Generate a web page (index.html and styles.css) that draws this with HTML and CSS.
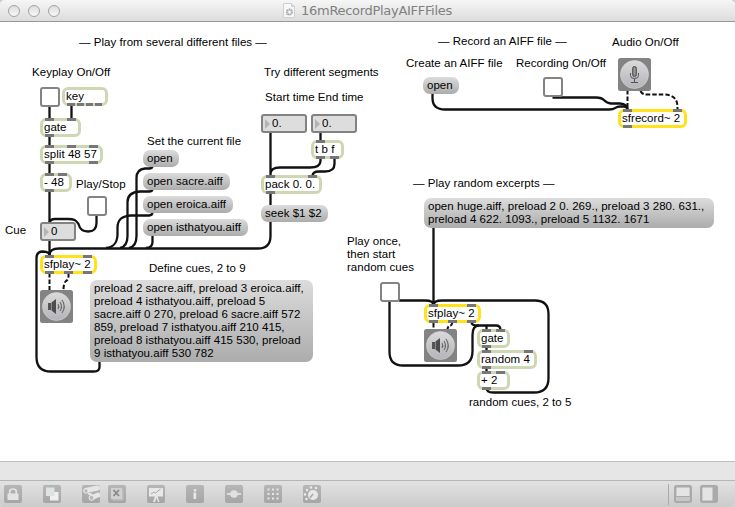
FILE: index.html
```html
<!DOCTYPE html>
<html lang="en">
<head>
<meta charset="utf-8">
<title>16mRecordPlayAIFFFiles</title>
<link rel="stylesheet" href="styles.css">
</head>
<body>
<div class="window">
<header class="titlebar">
  <div class="lights"><i></i><i></i><i></i></div>
  <div class="doc">
    <svg width="12" height="15" viewBox="0 0 12 15"><path d="M.5.5h8l3 3v11H.5z" fill="#f7f7f7" stroke="#cfcfcf"/><path d="M8.500.5v3h3" fill="#ddd" stroke="#cfcfcf"/><circle cx="6.500" cy="9" r="2.700" fill="#ddd" stroke="#a3adb0" stroke-width="1.700" stroke-dasharray="1.700 .6"/><path d="M4 11l-1 1M5 7L4 6" stroke="#e6c06a"/><circle cx="6.500" cy="9" r="1" fill="#fff"/></svg>
    <span>16mRecordPlayAIFFFiles</span>
  </div>
</header>

<main class="patcher">
  <svg class="wires" width="735" height="439" viewBox="0 22 735 439">
    <g class="cord">
      <path d="M49.500 106V119M71.500 105V119M49.500 136V146M49.500 163V174M49.500 191V223M49.500 240V256"/>
      <path d="M49.500 223Q50 219 55 219H68C76 219 76 221 78.500 224C80 230 83 231.500 88 231.500C94 231.500 96.500 229 96.500 223V215"/>
      <path d="M152.500 166Q152.500 168.500 149 168.500H145C139 169 136.500 173 136.500 178V236C136.500 243 134 247 129 248"/>
      <path d="M152.500 189Q152.500 191.500 149 191.500H140C131 192 127.500 196 127.500 202V236C127.500 243 125 247 120 248"/>
      <path d="M152.500 212Q152.500 215.500 149 215.500H131C121 216 117.500 220 117.500 228V235C117 243 114 247 106 248"/>
      <path d="M152.500 235V242Q152.500 247.500 146 248"/>
      <path d="M270.500 221V236Q270.500 248.500 258 248.500H59Q49.500 248.500 49.500 255"/>
      <path d="M99.500 361V367Q99.500 371.500 94 371.500H51Q36.500 371.500 36.500 357V258Q36.500 251.500 43 251.500Q49.500 252 49.500 255"/>
      <path d="M270.500 132V176M270.500 192V206M320.500 132V141M320.500 157V161Q320.500 167.500 310 167.500H280Q270.500 167.500 270.500 174M334.500 157V164Q334.500 171.500 325 171.500H319Q312.500 171.500 312.500 176"/>
      <path d="M432.500 93V98Q432.500 109.500 445 109.500H609C617 109.500 614 106.500 620 106.500H624Q627.500 106.500 627.500 110"/>
      <path d="M552.500 97.500H596C607 97.500 602 103 611 103.500H620Q627.500 104 627.500 110"/>
      <path d="M433.500 227V305M399 300.500H425Q433.500 300.500 433.500 305M433.500 305Q433.500 300.500 442 300.500H535Q548.500 300.500 548.500 314V378Q548.500 392.500 534 392.500H493Q486.500 392.500 486.500 388"/>
      <path d="M389.500 301V352Q389.500 365.500 403 365.500H458Q472.500 365.500 472.500 351V335Q472.500 325.500 479 325.500"/>
      <path d="M471.500 322Q471.500 325.500 477 325.500H496Q500.500 325.500 500.500 330M486.500 325.500V330M486.500 347V351M486.500 368V372"/>
    </g>
    <g class="signal">
      <path d="M49.500 273V291M68.500 273V277Q68 280 66 281Q63.500 283 63.500 290M627.500 90V110M640.500 91Q642 94.500 647 94.500H664Q677.500 95 677.500 107V110M433.500 323V330M452.500 322Q452 326 449 326Q447.500 327 447.500 330"/>
    </g>
  </svg>

  <p class="note n-files">— Play from several different files —</p>
  <p class="note n-keyplay">Keyplay On/Off</p>
  <p class="note n-segments">Try different segments</p>
  <p class="note n-times">Start time End time</p>
  <p class="note n-current">Set the current file</p>
  <p class="note n-playstop">Play/Stop</p>
  <p class="note n-cue">Cue</p>
  <p class="note n-define">Define cues, 2 to 9</p>
  <p class="note n-record">— Record an AIFF file —</p>
  <p class="note n-create">Create an AIFF file</p>
  <p class="note n-recording">Recording On/Off</p>
  <p class="note n-audio">Audio On/Off</p>
  <p class="note n-excerpts">— Play random excerpts —</p>
  <p class="note n-once">Play once,<br>then start<br>random cues</p>
  <p class="note n-random">random cues, 2 to 5</p>

  <div class="toggle t-key"></div>
  <div class="toggle t-play"></div>
  <div class="toggle t-rec"></div>
  <div class="toggle t-once"></div>

  <div class="obj o-key">key<svg class="ports"><path d="M5 17.500h8M15 17.500h7M24 17.500h7M33 17.500h7"/></svg></div>
  <div class="obj o-gate">gate<svg class="ports"><path d="M5 1.500h9M27 1.500h9M5 17.500h9"/></svg></div>
  <div class="obj o-split">split 48 57<svg class="ports"><path d="M5 1.500h9M27 1.500h9M49 1.500h9M5 17.500h9M49 17.500h9"/></svg></div>
  <div class="obj o-minus">- 48<svg class="ports"><path d="M5 1.500h9M18 1.500h9M5 17.500h9"/></svg></div>
  <div class="obj sound o-sfplay">sfplay~ 2<svg class="ports"><path d="M5 1.500h9M43 1.500h9M5 17.500h9M24 17.500h9M43 17.500h9"/></svg></div>
  <div class="obj o-tbf">t b f<svg class="ports"><path d="M5 1.500h9M5 17.500h9M19 17.500h9"/></svg></div>
  <div class="obj o-pack">pack 0. 0.<svg class="ports"><path d="M5 1.500h9M47 1.500h9M5 17.500h9"/></svg></div>
  <div class="obj sound o-sfrecord">sfrecord~ 2<svg class="ports"><path d="M5 1.500h9M55 1.500h9M5 17.500h9"/></svg></div>
  <div class="obj sound o-sfplay2">sfplay~ 2<svg class="ports"><path d="M5 1.500h9M43 1.500h9M5 17.500h9M24 17.500h9M43 17.500h9"/></svg></div>
  <div class="obj o-gate2">gate<svg class="ports"><path d="M5 1.500h9M19 1.500h9M5 17.500h9"/></svg></div>
  <div class="obj o-random">random 4<svg class="ports"><path d="M5 1.500h9M47 1.500h9M5 17.500h9"/></svg></div>
  <div class="obj o-plus">+ 2<svg class="ports"><path d="M5 1.500h9M19 1.500h9M5 17.500h9"/></svg></div>

  <div class="num f-cue">0</div>
  <div class="num f-start">0.</div>
  <div class="num f-end">0.</div>

  <div class="msg m-open">open</div>
  <div class="msg m-sacre">open sacre.aiff</div>
  <div class="msg m-eroica">open eroica.aiff</div>
  <div class="msg m-isthatyou">open isthatyou.aiff</div>
  <div class="msg m-seek">seek $1 $2</div>
  <div class="msg m-preload">preload 2 sacre.aiff, preload 3 eroica.aiff,<br>preload 4 isthatyou.aiff, preload 5<br>sacre.aiff 0 270, preload 6 sacre.aiff 572<br>859, preload 7 isthatyou.aiff 210 415,<br>preload 8 isthatyou.aiff 415 530, preload<br>9 isthatyou.aiff 530 782</div>
  <div class="msg m-create">open</div>
  <div class="msg m-huge">open huge.aiff, preload 2 0. 269., preload 3 280. 631.,<br>preload 4 622. 1093., preload 5 1132. 1671</div>

  <svg class="audio a-mic" viewBox="0 0 33 33"><use href="#disc"/><g fill="none" stroke="#555"><rect x="14.500" y="8.500" width="4" height="10" rx="2" fill="#777"/><path d="M14.500 11h4M14.500 13h4M14.500 15h4M16.500 9v9" stroke="#aaa" stroke-width=".5"/><path d="M12.500 15v2.500q0 3 4 3t4-3V15M16.500 20.500V24M13 24.500h7"/></g></svg>
  <svg class="audio a-out" viewBox="0 0 33 33"><use href="#disc"/><use href="#speaker"/></svg>
  <svg class="audio a-out2" viewBox="0 0 33 33"><use href="#disc"/><use href="#speaker"/></svg>
  <svg class="defs" width="0" height="0"><defs>
    <linearGradient id="face" x2="0" y2="1"><stop stop-color="#dadada"/><stop offset="1" stop-color="#b3b3b9"/></linearGradient>
    <g id="disc"><rect width="33" height="33" rx="2.500" fill="#838383"/><circle cx="16.500" cy="16.500" r="14" fill="url(#face)" stroke="#d6d6d6" stroke-width=".6"/></g>
    <g id="speaker"><path d="M8 13h3v7H8z" fill="#555"/><path d="M11.500 12.500L16 9v15l-4.500-3.500z" fill="#4d4d4d"/><path d="M18 14q1.600 2.500 0 5M20 12q3 4.500 0 9M22 10q4.500 6.500 0 13" fill="none" stroke="#666" stroke-width="1.100"/></g>
  </defs></svg>
</main>

<div class="status"></div>
<footer class="toolbar">
  <div class="tools">
    <svg class="tool" viewBox="0 0 18 18"><path d="M5.700 9V6.500q0-2.500 3.300-2.500t3.300 2.500V9" fill="none" stroke="#e4e4e4" stroke-width="1.700"/><rect x="3.500" y="8.500" width="11" height="6.500" rx=".6" fill="#e4e4e4"/></svg>
    <svg class="tool patch" viewBox="0 0 18 18"><rect x="7" y="7" width="8.500" height="8.500" fill="#f0f0f0"/><rect x="3" y="2.500" width="8.500" height="8.500" fill="#dfe3e2"/></svg>
    <svg class="tool" viewBox="0 0 18 18"><path d="M4 5.500L15.500 3M10 12.500l6-2.500" stroke="#e6e6e6" stroke-width="5" stroke-linecap="round"/><path d="M6 8.500l4 1" stroke="#e6e6e6" stroke-width="2"/><g fill="#b8b8b8" stroke="#eee"><circle cx="4" cy="6" r="2.200"/><circle cx="9.500" cy="12.800" r="2.500"/></g></svg>
    <svg class="tool close" viewBox="0 0 18 18"><path d="M14 4l1.500 1v10.500H5L3.500 14" fill="#bdbdbd"/><rect x="3" y="3" width="11" height="11" fill="#d1d1d1"/><path d="M5.500 5L11 11M11 5L5.500 11" stroke="#888" stroke-width="1.800"/></svg>
    <svg class="tool" viewBox="0 0 18 18"><path d="M2 3h14v8.500H2zM8 11.500h2L8 17H6zM9 11.500h1.500L12.500 17H11z" fill="#e8e8e8"/><path d="M4 9l3-2 1.500 1 5-4" fill="none" stroke="#aaa"/></svg>
    <svg class="tool" viewBox="0 0 18 18"><path d="M7.800 4h2.400v2.400H7.800zM7.500 7.500h2.700V14H7.500z" fill="#e8e8e8"/></svg>
    <svg class="tool" viewBox="0 0 18 18"><path d="M2 9h14" stroke="#ddd" stroke-width="2"/><circle cx="9" cy="9" r="3.800" fill="#e0e0e0"/></svg>
    <svg class="tool" viewBox="0 0 18 18"><path d="M3.500 4.500h12M3.500 9h12M3.500 13.500h12" stroke="#e6e6e6" stroke-width="2" stroke-dasharray="2 2.500"/></svg>
    <svg class="tool" viewBox="0 0 18 18"><circle cx="10" cy="10" r="5" fill="#e8e8e8"/><path d="M10 9l-3 4" stroke="#aaa" stroke-width="1.500"/><g fill="#eee"><circle cx="3.500" cy="14" r="1.200"/><circle cx="2" cy="9.500" r="1.200"/><circle cx="4" cy="5" r="1.200"/><circle cx="8" cy="2.500" r="1.200"/><circle cx="13" cy="3" r="1.200"/></g></svg>
  </div>
  <div class="views">
    <svg width="18" height="18"><rect x="1.200" y="1.200" width="15.600" height="15.600" rx="1.500" fill="#e4e4e4" stroke="#aaa" stroke-width="2.400"/><path d="M2.400 12h13.200v3.600H2.400z" fill="#c7c7c7"/><path d="M2 11.500h14" stroke="#aaa"/></svg>
    <svg width="18" height="18"><rect x="1.200" y="1.200" width="15.600" height="15.600" rx="1.500" fill="#e4e4e4" stroke="#aaa" stroke-width="2.400"/><path d="M12.500 2h4v14h-4z" fill="#aaa"/></svg>
  </div>
</footer>
</div>
</body>
</html>
```
FILE: styles.css
```css
* { box-sizing: border-box; }
body { margin: 0; background: #ccc; font: 11.5px/13px "Liberation Sans", Arial, sans-serif; letter-spacing: 0.04px; color: #000; }
.window { width: 735px; height: 507px; display: flex; flex-direction: column; overflow: hidden; border-radius: 5px 5px 4px 4px; background: #fff; }

.titlebar { position: relative; height: 22px; display: flex; align-items: center; justify-content: center; background: linear-gradient(#f6f6f6, #dcdcdc); border-bottom: 1px solid #999; }
.lights { position: absolute; left: 8px; top: 5px; display: flex; gap: 8px; }
.lights i { width: 12px; height: 12px; border: 1px solid #a2a2a2; border-radius: 50%; background: linear-gradient(#dedede, #f8f8f8); }
.doc { display: flex; gap: 6px; align-items: center; height: 21px; color: #808080; font: 13px/21px "DejaVu Sans", sans-serif; letter-spacing: -0.3px; }

.patcher { position: relative; height: 439px; background: #fff; }
.wires { position: absolute; left: 0; top: 0; }
.cord path, .signal path { fill: none; stroke: #111; stroke-width: 2.3; }
.signal path { stroke-width: 2; stroke-dasharray: 4.5 2; }
.defs { position: absolute; }

.note, .obj, .msg, .num, .toggle, .audio { position: absolute; margin: 0; white-space: nowrap; }
.obj { height: 19px; padding: 0 1px; border: 3px solid #cdd7b3; border-radius: 6px; background: #fff; }
.obj.sound { border-color: #ffe21a; }
.ports { position: absolute; left: -3px; top: -3px; width: 72px; height: 19px; overflow: visible; fill: none; stroke: #777; stroke-width: 3; }
.msg { height: 17px; padding: 2px 4px; border-radius: 7px; background: linear-gradient(#dcdcdc, #acacac); }
.num { height: 19px; width: 46px; padding: 0 0 0 9px; line-height: 14px; border: 2px solid #828282; border-radius: 3px; background: #ddd; }
.num::before { content: ""; position: absolute; left: 2px; top: 3px; border-left: 5px solid #b4b4b4; border-top: 5px solid transparent; border-bottom: 5px solid transparent; }
.toggle { width: 20px; height: 20px; border: 2px solid #838383; border-radius: 3px; background: #fff; }
.audio { width: 33px; height: 33px; }

.n-files { left: 79px; top: 14px; }
.n-keyplay { left: 32px; top: 44px; }
.n-segments { left: 264px; top: 44px; }
.n-times { left: 265px; top: 69px; }
.n-current { left: 147px; top: 113px; }
.n-playstop { left: 76px; top: 156px; }
.n-cue { left: 5px; top: 202px; }
.n-define { left: 149px; top: 240px; }
.n-record { left: 438px; top: 13px; }
.n-create { left: 406px; top: 35px; }
.n-recording { left: 516px; top: 35px; }
.n-audio { left: 612px; top: 14px; }
.n-excerpts { left: 413px; top: 155px; }
.n-once { left: 347px; top: 213px; }
.n-random { left: 469px; top: 374px; }

.t-key { left: 40px; top: 65px; }
.t-play { left: 87px; top: 174px; }
.t-rec { left: 543px; top: 55px; }
.t-once { left: 380px; top: 260px; }

.o-key { left: 62px; top: 65px; width: 46px; }
.o-gate { left: 40px; top: 96px; width: 41px; }
.o-split { left: 40px; top: 123px; width: 63px; }
.o-minus { left: 40px; top: 151px; width: 32px; }
.o-sfplay { left: 40px; top: 233px; width: 57px; }
.o-tbf { left: 311px; top: 118px; width: 33px; }
.o-pack { left: 261px; top: 153px; width: 61px; }
.o-sfrecord { left: 618px; top: 87px; width: 69px; }
.o-sfplay2 { left: 424px; top: 282px; width: 57px; }
.o-gate2 { left: 477px; top: 307px; width: 33px; }
.o-random { left: 477px; top: 328px; width: 60px; }
.o-plus { left: 477px; top: 349px; width: 33px; }

.f-cue { left: 40px; top: 200px; width: 36px; }
.f-start { left: 261px; top: 92px; }
.f-end { left: 311px; top: 92px; }

.m-open { left: 143px; top: 128px; width: 36px; }
.m-sacre { left: 143px; top: 151px; width: 87px; }
.m-eroica { left: 143px; top: 174px; width: 90px; }
.m-isthatyou { left: 143px; top: 197px; width: 105px; }
.m-seek { left: 261px; top: 183px; width: 67px; }
.m-preload { left: 90px; top: 258px; width: 223px; height: 82px; }
.m-create { left: 423px; top: 55px; width: 36px; }
.m-huge { left: 424px; top: 176px; width: 290px; height: 30px; }

.a-mic { left: 618px; top: 36px; }
.a-out { left: 40px; top: 268px; }
.a-out2 { left: 424px; top: 307px; }

.status { height: 19px; background: #e6e6e6; border-top: 1px solid #bdbdbd; }
.toolbar { height: 27px; display: flex; justify-content: space-between; padding: 4px 17px 0 4px; border-top: 1px solid #b5b5b5; background: linear-gradient(#e2e2e2, #cbcbcb); }
.tools { display: flex; gap: 21px; }
.tool { width: 18px; height: 18px; border-radius: 2px; background: linear-gradient(#b6b6b6, #a6a6a6); }
.tool.close { margin-left: -13px; }
.views { display: flex; gap: 8px; height: 21px; margin-top: -1px; padding: 1px 0 0 5px; border-left: 1px solid #aaa; }
```
